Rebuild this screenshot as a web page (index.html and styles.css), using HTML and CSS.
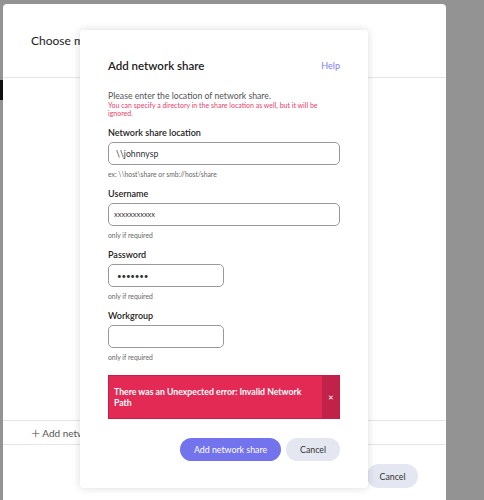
FILE: index.html
```html
<!DOCTYPE html>
<html lang="en">
<head>
    <meta charset="UTF-8">
    <meta name="viewport" content="width=device-width, initial-scale=1.0">
    <title>Add network share</title>
    <link rel="stylesheet" href="styles.css">
</head>
<body>
    <div class="edge"></div>

    <div class="sheet">
        <div class="sheet-head">Choose music folder</div>
        <div class="sheet-body"></div>
        <div class="sheet-add"><span class="plus">+</span>Add network share</div>
        <div class="sheet-foot">
            <button class="btn btn-grey">Cancel</button>
        </div>
    </div>

    <div class="dialog">
        <div class="dialog-head">
            <h1>Add network share</h1>
            <a class="help" href="#">Help</a>
        </div>

        <p class="intro">Please enter the location of network share.</p>
        <p class="warn">You can specify a directory in the share location as well, but it will be ignored.</p>

        <div class="field">
            <label>Network share location</label>
            <input type="text" class="wide" value="\\johnnysp">
            <div class="hint">ex: \\host\share or smb://host/share</div>
        </div>

        <div class="field">
            <label>Username</label>
            <input type="text" class="wide small-text" value="xxxxxxxxxxx">
            <div class="hint">only if required</div>
        </div>

        <div class="field">
            <label>Password</label>
            <input type="password" class="short" value="1234567">
            <div class="hint">only if required</div>
        </div>

        <div class="field">
            <label>Workgroup</label>
            <input type="text" class="short" value="">
            <div class="hint">only if required</div>
        </div>

        <div class="error">
            <div class="error-text">There was an Unexpected error: Invalid Network Path</div>
            <div class="error-close">&#x2715;</div>
        </div>

        <div class="actions">
            <button class="btn btn-primary">Add network share</button>
            <button class="btn btn-grey">Cancel</button>
        </div>
    </div>
</body>
</html>
```

FILE: styles.css
```css
body {
    font-family: Lato, "Open Sans", sans-serif;
    margin: 0;
    width: 484px;
    height: 500px;
    overflow: hidden;
    background-color: #939393;
    position: relative;
    color: #222;
}
.edge {
    position: absolute;
    left: 0;
    top: 80px;
    width: 3px;
    height: 20px;
    background: #111;
}

/* modal underneath */
.sheet {
    margin: 4px 0 0 3px;
    width: 443px;
    height: 520px;
    background: white;
    border-radius: 4px;
    display: flex;
    flex-direction: column;
}
.sheet-head {
    height: 73px;
    padding-left: 28px;
    border-bottom: 1px solid #e6e6e6;
    font-size: 12px;
    line-height: 73px;
    color: #222;
}
.sheet-body {
    height: 342px;
}
.sheet-add {
    display: flex;
    align-items: center;
    height: 23px;
    padding-left: 28px;
    border-top: 1px solid #e6e6e6;
    border-bottom: 1px solid #e6e6e6;
    font-size: 10px;
    color: #555;
}
.sheet-add .plus {
    font-size: 16px;
    line-height: 14px;
    color: #444;
    font-weight: 300;
    margin-right: 2px;
}
.sheet-foot {
    display: flex;
    justify-content: flex-end;
    padding: 19px 28px 0 0;
}

/* dialog on top */
.dialog {
    position: absolute;
    left: 80px;
    top: 30px;
    width: 232px;
    padding: 25px 28px 27px;
    background: white;
    border-radius: 4px;
    box-shadow: 0 0 8px rgba(0,0,0,0.15);
}
.dialog-head {
    display: flex;
    justify-content: space-between;
    align-items: center;
    height: 20px;
    margin-bottom: 16px;
}
.dialog-head h1 {
    margin: 0;
    font-size: 11.5px;
    font-weight: 600;
    color: #222;
}
.help {
    color: #7b7cf6;
    font-size: 9px;
    text-decoration: none;
}
.intro {
    margin: 0;
    font-size: 8.7px;
    line-height: 10px;
    color: #555;
}
.warn {
    margin: 0 0 10px;
    font-size: 7px;
    line-height: 8px;
    color: #e8416a;
}
.field {
    display: flex;
    flex-direction: column;
    align-items: flex-start;
}
.field label {
    font-size: 9px;
    font-weight: 600;
    line-height: 12px;
    color: #222;
    margin-bottom: 3px;
}
.field input {
    box-sizing: border-box;
    height: 23px;
    padding: 0 7px;
    border: 1px solid #999;
    border-radius: 5px;
    font-family: Lato, sans-serif;
    font-size: 8.7px;
    color: #333;
    background: white;
}
.field input.wide {
    width: 232px;
}
.field input.short {
    width: 116px;
}
.field input.small-text {
    font-size: 7.5px;
    padding-left: 5px;
}
.field input[type="password"] {
    font-size: 8px;
    letter-spacing: -0.2px;
    padding-left: 8px;
}
.hint {
    font-size: 6.8px;
    line-height: 8px;
    color: #666;
    margin: 5px 0 10px;
}
.error {
    box-sizing: border-box;
    display: flex;
    margin-top: 4px;
    height: 44px;
    background: #e22a55;
    border: 1px solid #cc1d47;
}
.error-text {
    flex: 1;
    padding: 0 8px 0 5px;
    display: flex;
    align-items: center;
    font-size: 8.7px;
    font-weight: 700;
    line-height: 11px;
    color: white;
}
.error-close {
    width: 17px;
    display: flex;
    align-items: center;
    justify-content: center;
    background: #c0224a;
    color: white;
    font-size: 7px;
}
.actions {
    display: flex;
    justify-content: flex-end;
    gap: 5px;
    margin-top: 19px;
}
.btn {
    height: 23px;
    border: none;
    border-radius: 12px;
    font-family: Lato, sans-serif;
    font-size: 8.8px;
    cursor: pointer;
}
.btn-primary {
    width: 101px;
    background: #7373ee;
    color: white;
}
.btn-grey {
    width: 54px;
    background: #e4e7f1;
    color: #333;
}
.sheet-foot .btn-grey {
    width: 51px;
    height: 24px;
}
```
